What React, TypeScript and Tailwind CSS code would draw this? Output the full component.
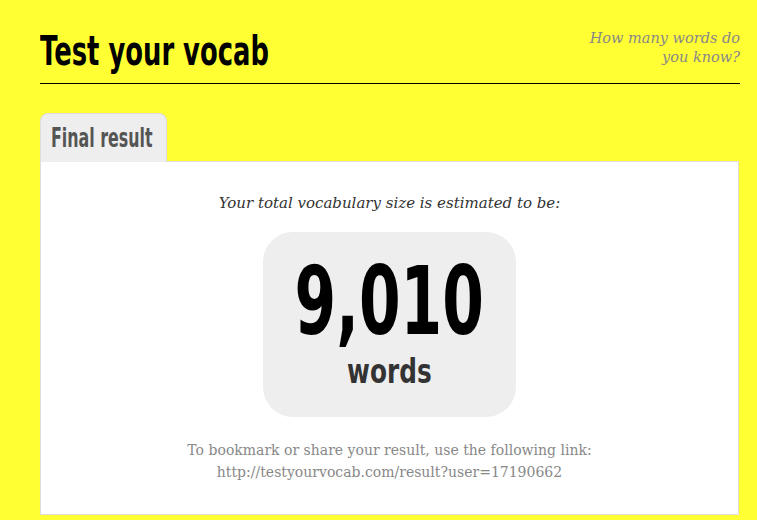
import React from 'react';

const impact = "font-['DejaVu_Sans',sans-serif] font-bold";
const serif = "font-['Georgia','DejaVu_Serif','Liberation_Serif',serif]";

export default function App() {
  return (
    <div className="min-h-[520px] w-full bg-[#ffff33] pl-10 pr-[17px] pt-6">
      <header className="flex items-start justify-between border-b border-black pb-[8px]">
        <h1 className={`${impact} mt-[3px] text-[41px] leading-[48px] text-black`}>
          <span className="inline-block origin-left scale-x-[0.63]">Test your vocab</span>
        </h1>
        <p className={`${serif} mt-[5px] text-right text-[14.5px] italic leading-[19px] text-[#888]`}>
          How many words do
          <br />
          you know?
        </p>
      </header>

      <div className="mt-[28px] flex">
        <div className="relative top-px w-[127px] overflow-hidden rounded-t-lg border border-b-0 border-[#ddd] bg-[#eee] pt-[9px] pb-[9px] pl-[10px]">
          <div className={`${impact} w-[200px] origin-left scale-x-[0.61] text-[26px] leading-[30px] text-[#555]`}>
            Final result
          </div>
        </div>
      </div>

      <section className="mr-px flex h-[354px] flex-col items-center border border-[#ddd] bg-white pt-[30px]">
        <p className={`${serif} text-[15px] italic leading-[22px] text-[#333]`}>
          Your total vocabulary size is estimated to be:
        </p>
        <div className="mt-[18px] flex h-[185px] w-[253px] flex-col items-center rounded-[30px] bg-[#eee]">
          <div className={`${impact} mt-[21px] scale-x-[0.63] whitespace-nowrap text-[95px] leading-[96px] text-black`}>
            9,010
          </div>
          <div className={`${impact} mt-[3px] scale-x-[0.75] text-[33px] leading-[40px] text-[#333]`}>
            words
          </div>
        </div>
        <p className={`${serif} mt-[22px] text-center text-[14px] leading-[22px] text-[#888]`}>
          To bookmark or share your result, use the following link:
          <br />
          http://testyourvocab.com/result?user=17190662
        </p>
      </section>
    </div>
  );
}
